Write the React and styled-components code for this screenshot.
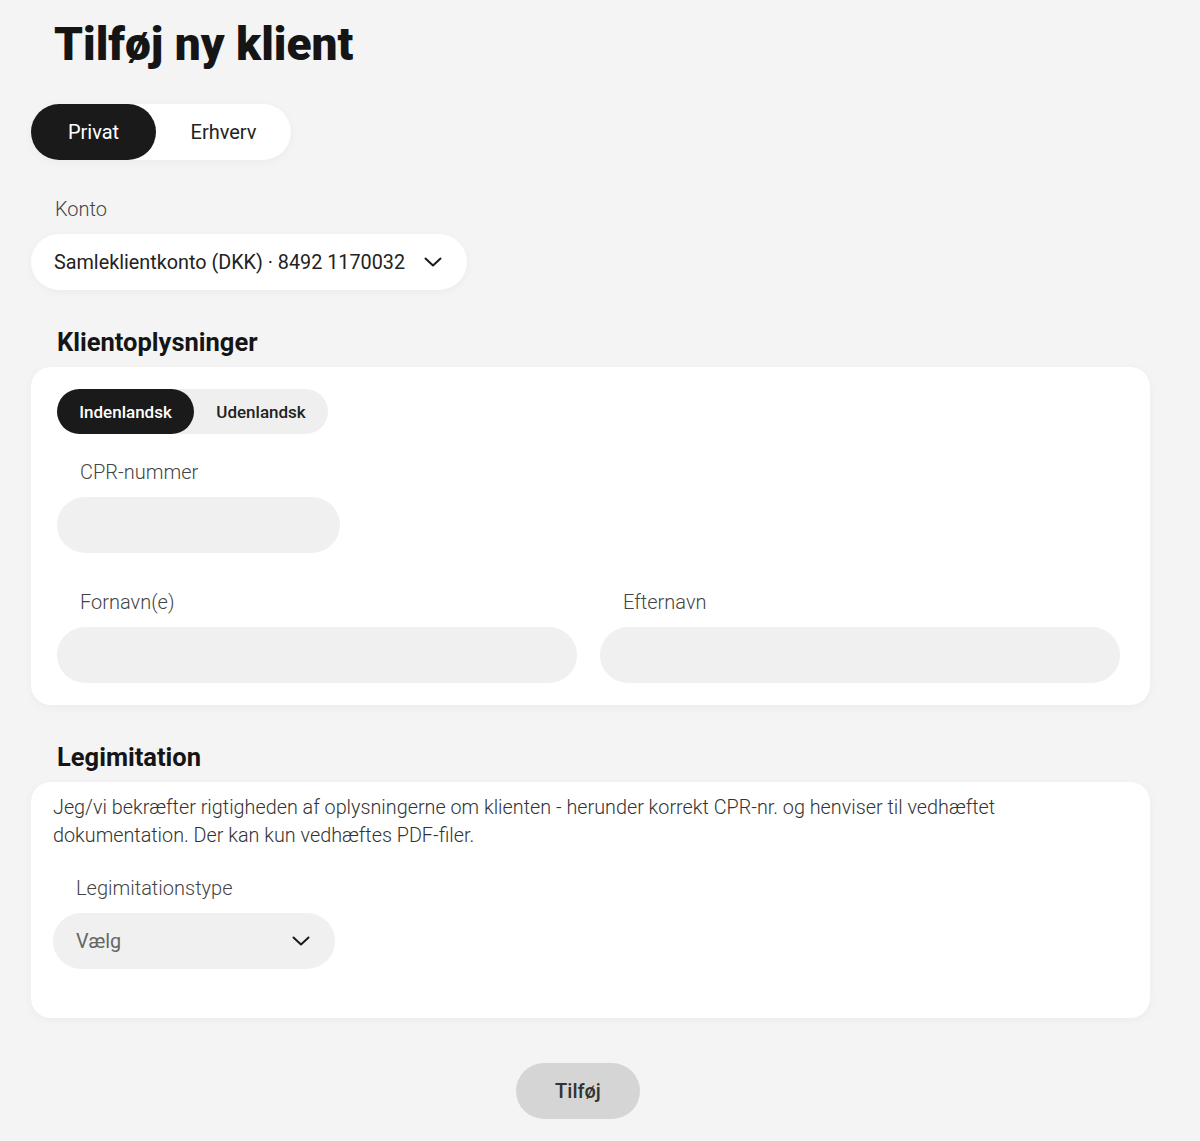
import styled, { createGlobalStyle } from 'styled-components';

const GlobalStyle = createGlobalStyle`
  html, body {
    margin: 0;
    padding: 0;
    background: #f4f4f4;
  }
  body {
    font-family: Roboto, "Liberation Sans", Arial, sans-serif;
    color: #1a1a1a;
  }
`;

const Page = styled.div`
  display: flex;
  flex-direction: column;
  align-items: flex-start;
  padding: 18px 50px 30px 31px;
  min-height: 1141px;
  box-sizing: border-box;
`;

const Title = styled.h1`
  margin: 0 0 33px 23px;
  font-size: 46px;
  line-height: 53px;
  font-weight: 900;
  color: #151515;
`;

const Segmented = styled.div`
  display: inline-flex;
  align-items: stretch;
  height: ${(p) => (p.$small ? '45px' : '56px')};
  border-radius: 999px;
  background: ${(p) => (p.$small ? '#efefef' : '#fff')};
  box-shadow: ${(p) => (p.$small ? 'none' : '0 2px 8px rgba(0,0,0,0.04)')};
`;

const SegButton = styled.button`
  width: ${(p) => p.$w}px;
  border: none;
  border-radius: 999px;
  background: ${(p) => (p.$active ? '#1a1a1a' : 'transparent')};
  color: ${(p) => (p.$active ? '#fff' : '#222')};
  font-family: inherit;
  font-size: ${(p) => (p.$small ? '17px' : '20px')};
  font-weight: ${(p) => (p.$small ? 500 : 400)};
  padding: 0;
  cursor: pointer;
`;

const Label = styled.div`
  margin: ${(p) => p.$top || 27}px 0 14px ${(p) => p.$indent || 23}px;
  font-size: 20px;
  line-height: 22px;
  font-weight: 300;
  color: #444;
`;

const SelectBox = styled.div`
  display: flex;
  align-items: center;
  justify-content: space-between;
  width: ${(p) => p.$w}px;
  height: 56px;
  box-sizing: border-box;
  padding: 0 25px 0 23px;
  border-radius: 999px;
  background: ${(p) => (p.$filled ? '#f0f0f0' : '#fff')};
  box-shadow: ${(p) => (p.$filled ? 'none' : '0 2px 8px rgba(0,0,0,0.04)')};
  font-size: 19.8px;
  color: ${(p) => (p.$filled ? '#666' : '#222')};
`;

const SectionHeading = styled.h2`
  margin: 38px 0 11px 26px;
  font-size: 25.5px;
  line-height: 28px;
  font-weight: 700;
  color: #151515;
`;

const Card = styled.div`
  align-self: stretch;
  display: flex;
  flex-direction: column;
  align-items: flex-start;
  background: #fff;
  border-radius: 20px;
  box-shadow: 0 2px 10px rgba(0,0,0,0.04);
  padding: ${(p) => p.$pad};
`;

const Input = styled.div`
  width: ${(p) => (p.$w ? `${p.$w}px` : '100%')};
  height: 56px;
  border-radius: 999px;
  background: #f0f0f0;
`;

const NameGrid = styled.div`
  align-self: stretch;
  display: grid;
  grid-template-columns: 1fr 1fr;
  column-gap: 23px;
`;

const Field = styled.div`
  display: flex;
  flex-direction: column;
`;

const Body = styled.p`
  margin: 0;
  font-size: 19.8px;
  line-height: 28px;
  font-weight: 300;
  color: #333;
  max-width: 1020px;
`;

const ButtonRow = styled.div`
  align-self: stretch;
  display: flex;
  justify-content: center;
  padding-right: 25px;
  margin-top: 45px;
`;

const SubmitButton = styled.button`
  width: 124px;
  height: 56px;
  border: none;
  border-radius: 999px;
  background: #d5d5d5;
  color: #333;
  font-family: inherit;
  font-size: 20px;
  font-weight: 500;
`;

const Chevron = () => (
  <svg width="18" height="10" viewBox="0 0 18 10" fill="none">
    <path d="M1.5 1.5L9 8.5L16.5 1.5" stroke="#1a1a1a" strokeWidth="2" strokeLinecap="round" strokeLinejoin="round" />
  </svg>
);

export default function App() {
  return (
    <>
      <GlobalStyle />
      <Page>
        <Title>Tilføj ny klient</Title>

        <Segmented>
          <SegButton $w={125} $active>Privat</SegButton>
          <SegButton $w={135}>Erhverv</SegButton>
        </Segmented>

        <Label $top={38} $indent={24}>Konto</Label>
        <SelectBox $w={436}>
          <span>Samleklientkonto (DKK) · 8492 1170032</span>
          <Chevron />
        </SelectBox>

        <SectionHeading>Klientoplysninger</SectionHeading>
        <Card $pad="22px 30px 22px 26px">
          <Segmented $small>
            <SegButton $small $w={137} $active>Indenlandsk</SegButton>
            <SegButton $small $w={134}>Udenlandsk</SegButton>
          </Segmented>

          <Label>CPR-nummer</Label>
          <Input $w={283} />

          <NameGrid>
            <Field>
              <Label $top={38}>Fornavn(e)</Label>
              <Input />
            </Field>
            <Field>
              <Label $top={38}>Efternavn</Label>
              <Input />
            </Field>
          </NameGrid>
        </Card>

        <SectionHeading>Legimitation</SectionHeading>
        <Card $pad="12px 30px 49px 22px">
          <Body>
            Jeg/vi bekræfter rigtigheden af oplysningerne om klienten - herunder korrekt CPR-nr. og henviser til vedhæftet
            <br />
            dokumentation. Der kan kun vedhæftes PDF-filer.
          </Body>
          <Label>Legimitationstype</Label>
          <SelectBox $w={282} $filled>
            <span>Vælg</span>
            <Chevron />
          </SelectBox>
        </Card>

        <ButtonRow>
          <SubmitButton>Tilføj</SubmitButton>
        </ButtonRow>
      </Page>
    </>
  );
}
